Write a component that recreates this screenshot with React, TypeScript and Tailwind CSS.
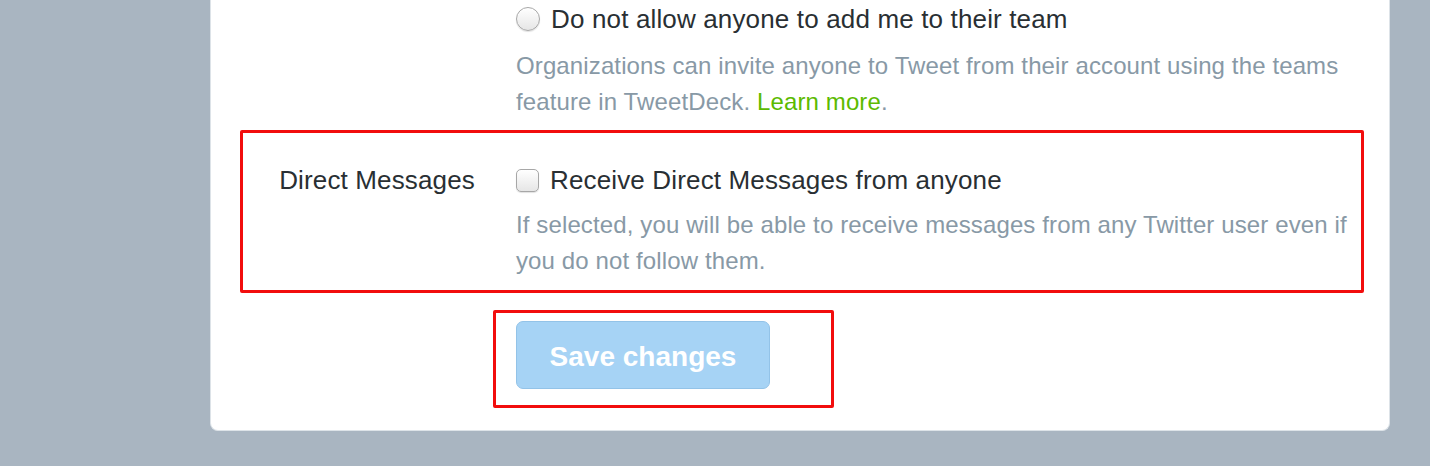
import React from "react";

const font = { fontFamily: '"Liberation Sans", Arial, sans-serif' };

const Radio: React.FC = () => (
  <span className="inline-block w-[24px] h-[24px] rounded-full border border-[#a7a7a7] bg-gradient-to-b from-white to-[#e6e6e6] shadow-[inset_0_1px_1px_rgba(255,255,255,0.9),0_1px_1px_rgba(0,0,0,0.12)] shrink-0" />
);

const Checkbox: React.FC = () => (
  <span className="inline-block w-[23px] h-[23px] rounded-[5px] border border-[#a7a7a7] bg-gradient-to-b from-white to-[#e6e6e6] shadow-[0_1px_1px_rgba(0,0,0,0.12)] shrink-0" />
);

export default function App() {
  return (
    <div className="min-h-[466px] bg-[#a9b5c1] pl-[210px]" style={font}>
      <div className="w-[1180px] bg-white border border-t-0 border-[#dde3e8] rounded-b-[8px] pb-[22px]">
        {/* team setting */}
        <div className="flex pt-[1px]">
          <div className="w-[305px] shrink-0" />
          <div className="flex flex-col">
            <label className="flex items-center gap-[11px] h-[36px] text-[26px] tracking-[0.15px] text-[#292f33]">
              <Radio />
              <span>Do not allow anyone to add me to their team</span>
            </label>
            <p className="mt-[11px] text-[24px] tracking-[0.12px] leading-[36px] text-[#8899a6] w-[836px]">
              Organizations can invite anyone to Tweet from their account using the teams feature in TweetDeck.{" "}
              <a className="text-[#5cba00]">Learn more</a>.
            </p>
          </div>
        </div>

        {/* direct messages */}
        <div className="mt-[10px] ml-[29px] mr-[25px] border-[3px] border-[#f20d0d] rounded-[2px] pt-[29px] pb-[11px] flex">
          <div className="w-[273px] shrink-0 h-[36px] flex items-center justify-end pr-[41px] text-[26px] tracking-[0.15px] text-[#292f33]">
            Direct Messages
          </div>
          <div className="flex flex-col">
            <label className="flex items-center gap-[11px] h-[36px] text-[26px] tracking-[0.15px] text-[#292f33]">
              <Checkbox />
              <span>Receive Direct Messages from anyone</span>
            </label>
            <p className="mt-[9px] text-[24px] tracking-[0.12px] leading-[36px] text-[#8899a6] w-[836px]">
              If selected, you will be able to receive messages from any Twitter user even if you do not follow them.
            </p>
          </div>
        </div>

        {/* save */}
        <div className="mt-[17px] ml-[282px] w-[341px] border-[3px] border-[#f20d0d] rounded-[2px] pt-[8px] pb-[16px] pl-[20px]">
          <button className="w-[254px] h-[68px] pt-[3px] rounded-[7px] bg-[#a6d3f5] border border-[#93c3e8] text-white text-[28px] font-bold">
            Save changes
          </button>
        </div>
      </div>
    </div>
  );
}
